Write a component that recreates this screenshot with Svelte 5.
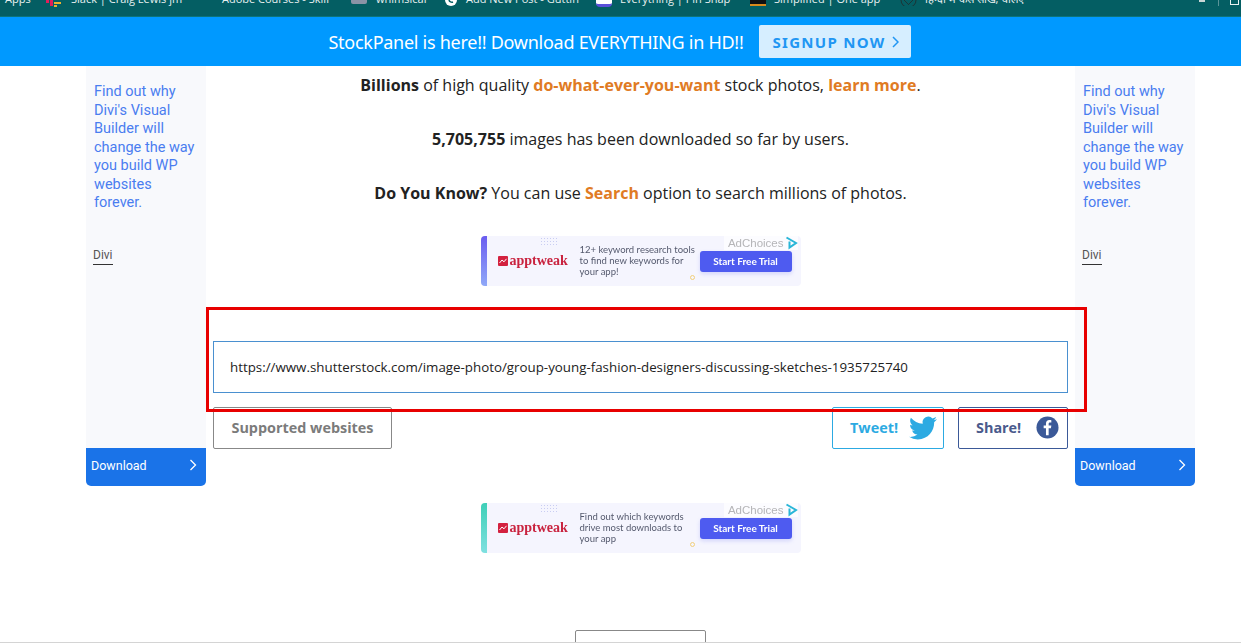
<script>
  const bookmarks = [
    { label: "Apps", icon: "none", width: 40 },
    { label: "Slack | Craig Lewis jm", icon: "slack", width: 152 },
    { label: "Adobe Courses - Skill", icon: "none", pad: 25, width: 154 },
    { label: "whimsical", icon: "square", width: 93 },
    { label: "Add New Post - Guttin", icon: "circle", width: 152 },
    { label: "Everything | Pin Snap", icon: "app", width: 154 },
    { label: "Simplified | One app", icon: "black", width: 150 },
    { label: "हिन्दी मे कैसे सीखें, चलिए", icon: "dark", width: 200 },
  ];

  const ads = [
    { accent: "top", lines: ["12+ keyword research tools", "to find new keywords for", "your app!"] },
    { accent: "bottom", lines: ["Find out which keywords", "drive most downloads to", "your app"] },
  ];
</script>

{#snippet sideAd()}
  <aside class="side">
    <div class="side-body">
      <p class="pitch">Find out why Divi's Visual Builder will change the way you build WP websites forever.</p>
      <span class="brand">Divi</span>
    </div>
    <div class="side-cta">
      <span>Download</span>
      <svg width="8" height="12" viewBox="0 0 8 12"><path d="M1.5 1l5 5-5 5" fill="none" stroke="#fff" stroke-width="1.3" /></svg>
    </div>
  </aside>
{/snippet}

{#snippet banner(ad)}
  <div class="ad" class:teal={ad.accent === "bottom"}>
    <i class="ad-dots"></i>
    <i class="ad-ring"></i>
    <div class="ad-logo">
      <svg width="10" height="10" viewBox="0 0 10 10"><rect width="10" height="10" rx="1" fill="#d3213f" /><path d="M1.5 7l2.5-3 2 1.800 2.500-3" fill="none" stroke="#fff" stroke-width="1" /></svg>
      <span>apptweak</span>
    </div>
    <div class="ad-copy">
      {#each ad.lines as line}
        <div>{line}</div>
      {/each}
    </div>
    <div class="ad-btn">Start Free Trial</div>
    <div class="ad-choices">
      <span>AdChoices</span>
      <svg width="13" height="14" viewBox="0 0 13 14"><path d="M1.500 1.500L11 7L4.500 11.500V5.500" fill="none" stroke="#29b6d8" stroke-width="2" /></svg>
    </div>
  </div>
{/snippet}

<div class="page">
  <div class="bookmarks">
    {#each bookmarks as b}
      <div class="bookmark" style="width: {b.width}px; padding-left: {b.pad ?? 0}px">
        {#if b.icon === "slack"}
          <svg width="18" height="16" viewBox="0 0 18 16"><rect x="1" y="0" width="3" height="3" fill="#e01e5a" /><rect x="5" y="0" width="3" height="6" fill="#e01e5a" /><rect x="9" y="2" width="7" height="2" fill="#ecb22e" /><rect x="9" y="5" width="3" height="2" fill="#ecb22e" /></svg>
        {:else if b.icon === "square"}
          <i class="ic-square"></i>
        {:else if b.icon === "circle"}
          <svg width="14" height="6" viewBox="0 0 14 6"><path d="M1 0a6 6 0 0 0 12 0" fill="#fff" /><path d="M5 0a3 3 0 0 0 4 2" fill="none" stroke="#045e63" stroke-width="1.500" /></svg>
        {:else if b.icon === "app"}
          <i class="ic-app"></i>
        {:else if b.icon === "black"}
          <i class="ic-black"></i>
        {:else if b.icon === "dark"}
          <svg width="17" height="6" viewBox="0 0 17 6"><path d="M1 0a7.500 7.500 0 0 0 15 0M4 0l5 5M13 0L8 5" fill="none" stroke="#1d3436" stroke-width="1" /></svg>
        {/if}
        <span>{b.label}</span>
      </div>
    {/each}
    <div class="bar-end">
      <i class="bar-dots"></i>
      <i class="bar-sep"></i>
      <i class="bar-list"></i>
    </div>
  </div>

  <header class="promo">
    <span>StockPanel is here!! Download EVERYTHING in HD!!</span>
    <div class="signup">SIGNUP NOW
      <svg width="7" height="12" viewBox="0 0 7 12"><path d="M1 1l5 5-5 5" fill="none" stroke="#2196f3" stroke-width="1.500" /></svg>
    </div>
  </header>

  <div class="layout">
    {@render sideAd()}

    <main class="main">
      <p class="line"><b>Billions</b> of high quality <b class="hl">do-what-ever-you-want</b> stock photos, <b class="hl">learn more</b>.</p>
      <p class="line"><b>5,705,755</b> images has been downloaded so far by users.</p>
      <p class="line"><b>Do You Know?</b> You can use <b class="hl">Search</b> option to search millions of photos.</p>

      {@render banner(ads[0])}

      <div class="url">https://www.shutterstock.com/image-photo/group-young-fashion-designers-discussing-sketches-1935725740</div>

      <div class="actions">
        <div class="btn supported">Supported websites</div>
        <div class="btn tweet">
          Tweet!
          <svg width="28" height="28" viewBox="0 0 24 24"><path fill="#2caae2" d="M23.950 4.570a10 10 0 0 1-2.820.780 4.960 4.960 0 0 0 2.160-2.720c-.950.560-2 .970-3.130 1.200a4.920 4.920 0 0 0-8.380 4.480C7.690 8.090 4.070 6.130 1.640 3.160a4.820 4.820 0 0 0-.660 2.480c0 1.710.870 3.210 2.190 4.100a4.900 4.900 0 0 1-2.230-.620v.060a4.920 4.920 0 0 0 3.950 4.830 5 5 0 0 1-2.210.080 4.940 4.940 0 0 0 4.600 3.420A9.870 9.870 0 0 1 0 19.540a14 14 0 0 0 7.560 2.210c9.050 0 14-7.500 14-13.980 0-.210 0-.420-.020-.630a9.940 9.940 0 0 0 2.460-2.550z" /></svg>
        </div>
        <div class="btn share">
          Share!
          <svg width="23" height="23" viewBox="0 0 24 24"><circle cx="12" cy="12" r="11.500" fill="#3b5998" /><path fill="#fff" d="M13.200 20v-7.200h2.400l.400-2.800h-2.800V8.300c0-.800.300-1.400 1.400-1.400H16V4.400c-.300 0-1.100-.100-2.100-.100-2.100 0-3.500 1.300-3.500 3.600v2.100H8v2.800h2.400V20z" /></svg>
        </div>
      </div>

      {@render banner(ads[1])}

      <div class="more"></div>
    </main>

    {@render sideAd()}
  </div>

  <div class="highlight"></div>
  <div class="bottom-edge"></div>
</div>

<style>
  :global(body) {
    margin: 0;
    background: #fff;
  }

  .page {
    position: relative;
    height: 643px;
    overflow: hidden;
    font-family: "Open Sans", sans-serif;
  }

  .bookmarks {
    display: flex;
    height: 16px;
    padding-left: 5px;
    background: #045e63;
    border-bottom: 1px solid #0d7479;
    overflow: hidden;
    color: #e9f1f1;
    font-size: 11px;
  }

  .bookmark {
    display: flex;
    align-items: flex-start;
    gap: 8px;
    flex: none;
    box-sizing: border-box;
    white-space: nowrap;
    line-height: 1;
  }

  .bookmark svg {
    flex: none;
  }

  .bookmark span {
    margin-top: -7px;
  }

  .ic-square {
    flex: none;
    width: 16px;
    height: 4px;
    margin-right: 1px;
    background: #8a93a6;
    border-radius: 0 0 2px 2px;
  }

  .ic-app {
    flex: none;
    width: 16px;
    height: 7px;
    background: #fff;
    border-radius: 0 0 4px 4px;
    border-bottom: 3px solid #5a4fd8;
    box-sizing: border-box;
  }

  .ic-black {
    flex: none;
    width: 16px;
    height: 6px;
    background: #111;
    border-bottom: 2px solid #d98a1c;
    box-sizing: border-box;
  }

  .bar-end {
    display: flex;
    align-items: flex-start;
    margin-left: auto;
    padding-right: 2px;
  }

  .bar-dots {
    width: 6px;
    height: 2px;
    margin-right: 13px;
    background: #c9d6d6;
  }

  .bar-sep {
    width: 1px;
    height: 6px;
    margin-right: 11px;
    background: #5b9498;
  }

  .bar-list {
    width: 7px;
    height: 4px;
    border: 1px solid #e9f1f1;
    border-top: 0;
  }

  .promo {
    display: flex;
    align-items: center;
    justify-content: center;
    gap: 15px;
    height: 49px;
    padding-right: 2px;
    background: #0099ff;
    color: #fff;
    font-family: "Noto Sans", sans-serif;
    font-size: 18px;
    letter-spacing: -0.27px;
  }

  .signup {
    display: flex;
    align-items: center;
    gap: 6px;
    box-sizing: border-box;
    width: 152px;
    height: 33px;
    padding-left: 14px;
    border-radius: 2px;
    background: #d6eeff;
    color: #2196f3;
    font-size: 15px;
    font-weight: 700;
    letter-spacing: 1.3px;
  }

  .layout {
    display: grid;
    grid-template-columns: 120px 869px 120px;
    margin-left: 86px;
    align-items: start;
  }

  .side {
    font-family: Roboto, sans-serif;
  }

  .side-body {
    box-sizing: border-box;
    height: 382px;
    padding: 17px 8px 0;
    background: #f8f9fc;
  }

  .pitch {
    margin: 0 0 31px;
    color: #4a7df0;
    font-size: 14.500px;
    line-height: 18.500px;
  }

  .brand {
    display: inline-block;
    margin-left: -1px;
    padding-bottom: 1px;
    border-bottom: 1px solid #333;
    color: #555;
    font-size: 12px;
    line-height: 15px;
  }

  .side-cta {
    display: flex;
    align-items: center;
    justify-content: space-between;
    box-sizing: border-box;
    height: 38px;
    padding: 0 9px 4px 5px;
    border-radius: 0 0 5px 5px;
    background: #1a73e8;
    color: #fff;
    font-size: 12.500px;
  }

  .main {
    display: flex;
    flex-direction: column;
    align-items: center;
    padding: 0 7px;
    color: #222;
  }

  .line {
    margin: 0 0 32px;
    font-size: 16px;
    line-height: 22px;
    text-align: center;
    white-space: nowrap;
  }

  .line:first-child {
    margin-top: 8px;
  }

  .hl {
    color: #e07b24;
  }

  .ad {
    position: relative;
    flex: none;
    display: flex;
    align-items: center;
    box-sizing: border-box;
    width: 320px;
    height: 50px;
    padding-left: 6px;
    border-radius: 4px;
    background: linear-gradient(#6a5cf0, #8fa8f8) left / 6px 100% no-repeat #f5f5fe;
    font-family: Lato, sans-serif;
    filter: blur(0.3px);
  }

  .ad.teal {
    background: linear-gradient(#3ecfb8, #7fe0e0) left / 6px 100% no-repeat #f5f5fe;
  }

  .ad-dots {
    position: absolute;
    left: 59px;
    top: 1px;
    width: 18px;
    height: 8px;
    background: radial-gradient(circle, #c9cdf2 0.6px, transparent 0.8px) 0 0 / 3px 3px;
  }

  .ad-ring {
    position: absolute;
    left: 209px;
    bottom: 6px;
    width: 3px;
    height: 3px;
    border: 1px solid #f1cf7a;
    border-radius: 50%;
  }

  .ad-logo {
    display: flex;
    align-items: center;
    gap: 2px;
    width: 87px;
    padding-left: 11px;
    box-sizing: border-box;
    color: #c9233f;
    font-family: "Liberation Serif", serif;
    font-size: 14px;
    font-weight: 700;
    white-space: nowrap;
  }

  .ad-copy {
    flex: 1;
    padding-left: 6px;
    padding-bottom: 1px;
    color: #555a6e;
    font-size: 9.500px;
    line-height: 11px;
    white-space: nowrap;
  }

  .ad-btn {
    margin-right: 9px;
    width: 92px;
    height: 21px;
    border-radius: 3px;
    background: #4e5bf0;
    box-shadow: 0 2px 4px rgba(78, 91, 240, 0.2);
    color: #fff;
    font-size: 10px;
    font-weight: 700;
    line-height: 21px;
    text-align: center;
  }

  .ad-choices {
    position: absolute;
    top: 0;
    right: 3px;
    display: flex;
    align-items: center;
    gap: 1px;
    padding-left: 4px;
    color: #b5b5b8;
    font-family: "Liberation Sans", sans-serif;
    font-size: 11.500px;
    background: rgba(255, 255, 255, 0.7);
  }

  .url {
    flex: none;
    align-self: stretch;
    box-sizing: border-box;
    height: 52px;
    margin-top: 55px;
    padding-left: 16px;
    border: 1px solid #4a90d0;
    color: #222;
    font-size: 13.333px;
    line-height: 50px;
    white-space: nowrap;
  }

  .actions {
    flex: none;
    align-self: stretch;
    display: flex;
    gap: 14px;
    margin-top: 14px;
    margin-bottom: 54px;
  }

  .btn {
    display: flex;
    align-items: center;
    justify-content: space-between;
    box-sizing: border-box;
    height: 42px;
    padding-bottom: 1px;
    border: 1px solid;
    border-radius: 2px;
    font-size: 14.400px;
    font-weight: 700;
  }

  .supported {
    justify-content: center;
    width: 179px;
    margin-right: auto;
    border-color: #888;
    color: #7b7b7b;
  }

  .tweet {
    width: 112px;
    padding-left: 17px;
    padding-right: 6px;
    border-color: #2caae2;
    color: #2caae2;
  }

  .share {
    width: 110px;
    padding-left: 17px;
    padding-right: 8px;
    border-color: #3b5998;
    color: #4a5a8c;
  }

  .more {
    flex: none;
    box-sizing: border-box;
    width: 131px;
    height: 42px;
    margin-top: 77px;
    border: 1px solid #888;
    border-radius: 2px;
    background: #fff;
  }

  /* red annotation drawn over the screenshot */
  .highlight {
    position: absolute;
    left: 206px;
    top: 307px;
    width: 881px;
    height: 105px;
    box-sizing: border-box;
    border: 3px solid #e80000;
    pointer-events: none;
  }

  .bottom-edge {
    position: absolute;
    left: 0;
    right: 0;
    bottom: 0;
    height: 1px;
    background: #d4d4d4;
  }
</style>
